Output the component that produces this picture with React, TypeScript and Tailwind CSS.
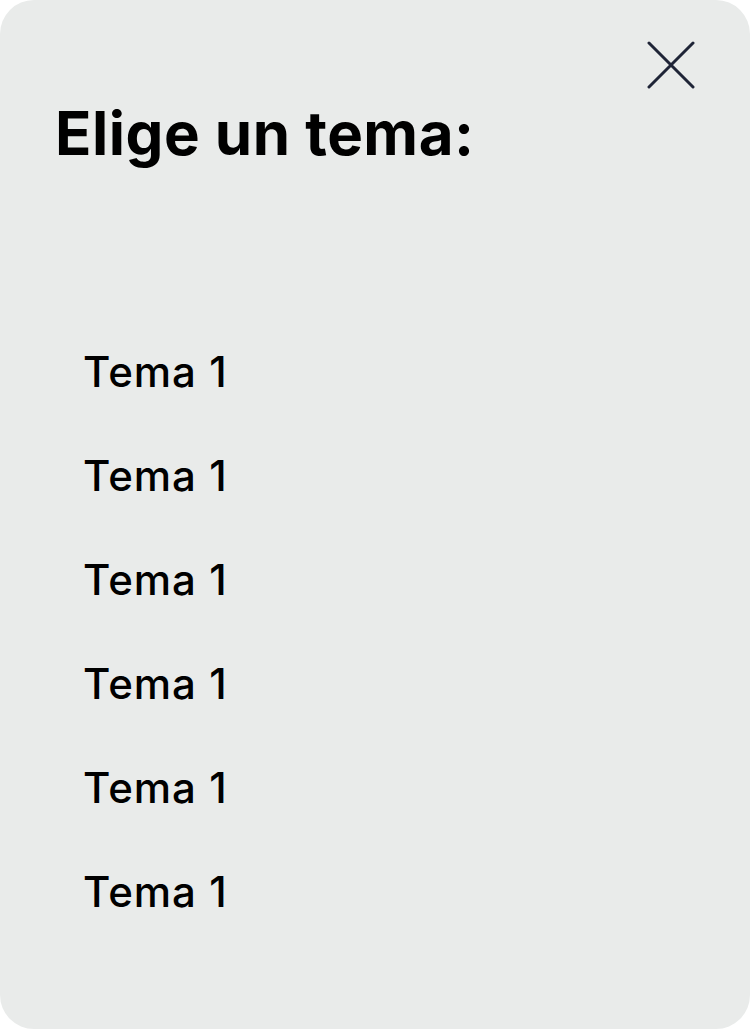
export default function App() {
  const temas = ["Tema 1", "Tema 1", "Tema 1", "Tema 1", "Tema 1", "Tema 1"];
  return (
    <div className="w-[750px] h-[1029px] bg-white" style={{ fontFamily: "Inter, 'Noto Sans', sans-serif" }}>
      <div className="relative w-full h-full bg-[#e9ebea] rounded-[34px] px-[55px] pt-[97px]">
        <button className="absolute top-[41px] right-[55px] text-[#1f2437]" aria-label="Cerrar">
          <svg width="48" height="48" viewBox="0 0 48 48" fill="none" stroke="currentColor" strokeWidth="3" strokeLinecap="round">
            <path d="M2 2 L46 46 M46 2 L2 46" />
          </svg>
        </button>
        <h1 className="text-[60px] leading-[72px] font-bold text-black tracking-[0.5px]">Elige un tema:</h1>
        <ul className="mt-[175px] pl-[28px] flex flex-col gap-[48px]">
          {temas.map((t, i) => (
            <li key={i} className="text-[42px] leading-[56px] font-medium text-black tracking-[1px]">
              {t}
            </li>
          ))}
        </ul>
      </div>
    </div>
  );
}
